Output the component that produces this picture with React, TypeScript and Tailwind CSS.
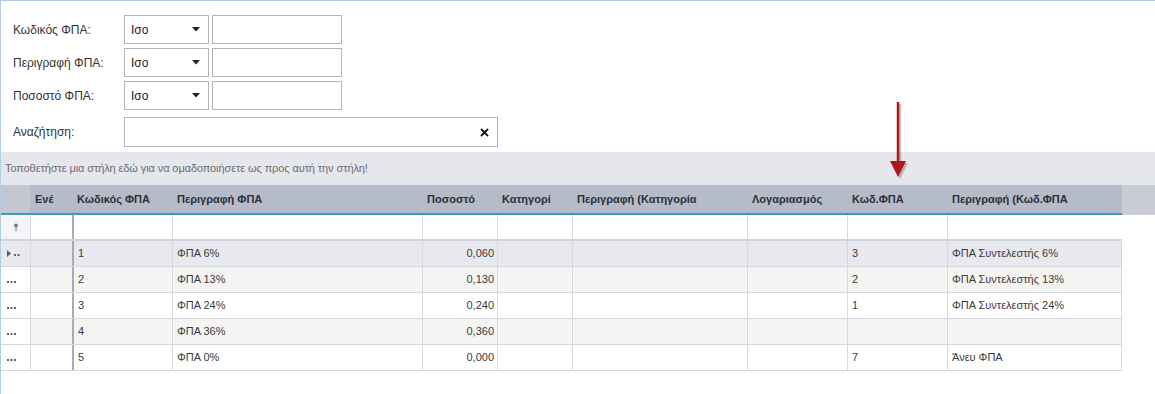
import React from "react";

const font = { fontFamily: '"Liberation Sans", "DejaVu Sans", sans-serif' };

type Col = { label: string; w: string; align?: "right" };
const cols: Col[] = [
  { label: "Ενέ", w: "w-[42px]" },
  { label: "Κωδικός ΦΠΑ", w: "w-[100px]" },
  { label: "Περιγραφή ΦΠΑ", w: "w-[250px]" },
  { label: "Ποσοστό", w: "w-[75px]", align: "right" },
  { label: "Κατηγορί", w: "w-[75px]" },
  { label: "Περιγραφή (Κατηγορία", w: "w-[175px]" },
  { label: "Λογαριασμός", w: "w-[100px]" },
  { label: "Κωδ.ΦΠΑ", w: "w-[100px]" },
  { label: "Περιγραφή (Κωδ.ΦΠΑ", w: "w-[175px]" },
];

const rows = [
  ["", "1", "ΦΠΑ 6%", "0,060", "", "", "", "3", "ΦΠΑ Συντελεστής 6%"],
  ["", "2", "ΦΠΑ 13%", "0,130", "", "", "", "2", "ΦΠΑ Συντελεστής 13%"],
  ["", "3", "ΦΠΑ 24%", "0,240", "", "", "", "1", "ΦΠΑ Συντελεστής 24%"],
  ["", "4", "ΦΠΑ 36%", "0,360", "", "", "", "", ""],
  ["", "5", "ΦΠΑ 0%", "0,000", "", "", "", "7", "Άνευ ΦΠΑ"],
];

const rowBg = ["bg-[#e8e9ee]", "bg-[#f4f5f3]", "bg-white", "bg-[#f4f5f3]", "bg-white"];

function SelectBox() {
  return (
    <div className="w-[85px] h-[29px] border border-[#b5b5b5] bg-white flex items-center justify-between pl-[6px] pr-[8px] text-[12px] text-[#222]">
      <span>Ισο</span>
      <svg width="8" height="5" viewBox="0 0 8 5">
        <path d="M0 0 L8 0 L4 4.5 Z" fill="#222" />
      </svg>
    </div>
  );
}

function FilterRow({ label }: { label: string }) {
  return (
    <div className="flex items-center h-[29px]">
      <div className="w-[111px] text-[12px] text-[#333]">{label}</div>
      <SelectBox />
      <div className="w-[130px] h-[29px] border border-[#b5b5b5] bg-white ml-[3px]" />
    </div>
  );
}

export default function App() {
  return (
    <div
      className="relative w-[1155px] h-[394px] bg-white border-t border-l border-[#b7cbe0] overflow-hidden"
      style={font}
    >
      {/* Form */}
      <div className="pl-[12px] pt-[14px] flex flex-col gap-[4px]">
        <FilterRow label="Κωδικός ΦΠΑ:" />
        <FilterRow label="Περιγραφή ΦΠΑ:" />
        <FilterRow label="Ποσοστό ΦΠΑ:" />
        <div className="flex items-center h-[30px] mt-[3px]">
          <div className="w-[111px] text-[12px] text-[#333]">Αναζήτηση:</div>
          <div className="w-[374px] h-[30px] border border-[#b5b5b5] bg-white flex items-center justify-end pr-[8px]">
            <svg width="9" height="9" viewBox="0 0 9 9">
              <path d="M1 1 L8 8 M8 1 L1 8" stroke="#111" strokeWidth="1.8" />
            </svg>
          </div>
        </div>
      </div>

      {/* Group panel */}
      <div className="mt-[5px] h-[33px] bg-[#e6e7ec] flex items-center pl-[4px] text-[11px] tracking-[-0.1px] text-[#6b6b72]">
        Τοποθετήστε μια στήλη εδώ για να ομαδοποιήσετε ως προς αυτή την στήλη!
      </div>

      {/* Header */}
      <div className="flex h-[30px] bg-[#c9ccd5]">
        <div className="flex bg-[#b6bbc8] border-b-2 border-[#3d98c4]">
          <div className="w-[29px] bg-[#c3c7d1]" />
          {cols.map((c, i) => (
            <div
              key={i}
              className={`${c.w} flex items-center pl-[5px] text-[11px] font-bold text-[#2b2f3a] whitespace-nowrap overflow-hidden`}
            >
              {c.label}
            </div>
          ))}
        </div>
      </div>

      {/* Filter row */}
      <div className="flex h-[26px] w-[1121px] border-b-2 border-[#d3d4d9]">
        <div className="w-[29px] flex items-center justify-center bg-[#f4f5f7]">
          <svg width="6" height="9" viewBox="0 0 6 9">
            <circle cx="3" cy="2.5" r="2" fill="#7a7f8a" />
            <path d="M3 4 L3 8.5" stroke="#7a7f8a" strokeWidth="1" />
          </svg>
        </div>
        {cols.map((c, i) => (
          <div
            key={i}
            className={`${c.w} bg-white ${i === 1 ? "border-l-2 border-[#a9abb3]" : "border-l border-[#d8d9dd]"}`}
          />
        ))}
      </div>

      {/* Data rows */}
      {rows.map((r, ri) => (
        <div key={ri} className={`flex h-[26px] w-[1121px] border-b border-[#d6d7dc] ${rowBg[ri]}`}>
          <div className={`w-[29px] flex items-center pl-[6px] text-[#5f6470] ${ri === 0 ? "bg-[#e8e9ee]" : "bg-white"}`}>
            {ri === 0 ? (
              <span className="flex items-center gap-[3px]">
                <svg width="4" height="7" viewBox="0 0 4 7">
                  <path d="M0 0 L4 3.5 L0 7 Z" fill="#5a5f6a" />
                </svg>
                <svg width="6" height="3" viewBox="0 0 6 3" className="mt-[4px]">
                  <rect x="0" y="0" width="2" height="2" fill="#5f6470" />
                  <rect x="3.5" y="0" width="2" height="2" fill="#5f6470" />
                </svg>
              </span>
            ) : (
              <svg width="9" height="3" viewBox="0 0 9 3" className="mt-[5px]">
                <rect x="0" y="0" width="2" height="2" fill="#5f6470" />
                <rect x="3.5" y="0" width="2" height="2" fill="#5f6470" />
                <rect x="7" y="0" width="2" height="2" fill="#5f6470" />
              </svg>
            )}
          </div>
          {cols.map((c, ci) => (
            <div
              key={ci}
              className={`${c.w} flex items-center text-[11px] text-[#3a3a3a] whitespace-nowrap ${
                c.align === "right" ? "justify-end pr-[3px]" : "pl-[4px]"
              } ${ci === 1 ? "border-l-2 border-[#a9abb3]" : "border-l border-[#d8d9dd]"} ${
                ci === 8 ? "border-r border-r-[#d8d9dd]" : ""
              }`}
            >
              {r[ci]}
            </div>
          ))}
        </div>
      ))}

      {/* Red arrow annotation */}
      <svg
        className="absolute left-[886px] top-[98px]"
        width="26"
        height="84"
        viewBox="0 0 26 84"
      >
        <g opacity="0.35" transform="translate(2,2)">
          <path d="M11 3 L11 62" stroke="#555" strokeWidth="2.5" />
          <path d="M3 62 L19 62 L11 78 Z" fill="#555" />
        </g>
        <path d="M11 3 L11 62" stroke="#b0141c" strokeWidth="2.5" />
        <path d="M3 62 L19 62 L11 78 Z" fill="#b0141c" />
      </svg>
    </div>
  );
}
